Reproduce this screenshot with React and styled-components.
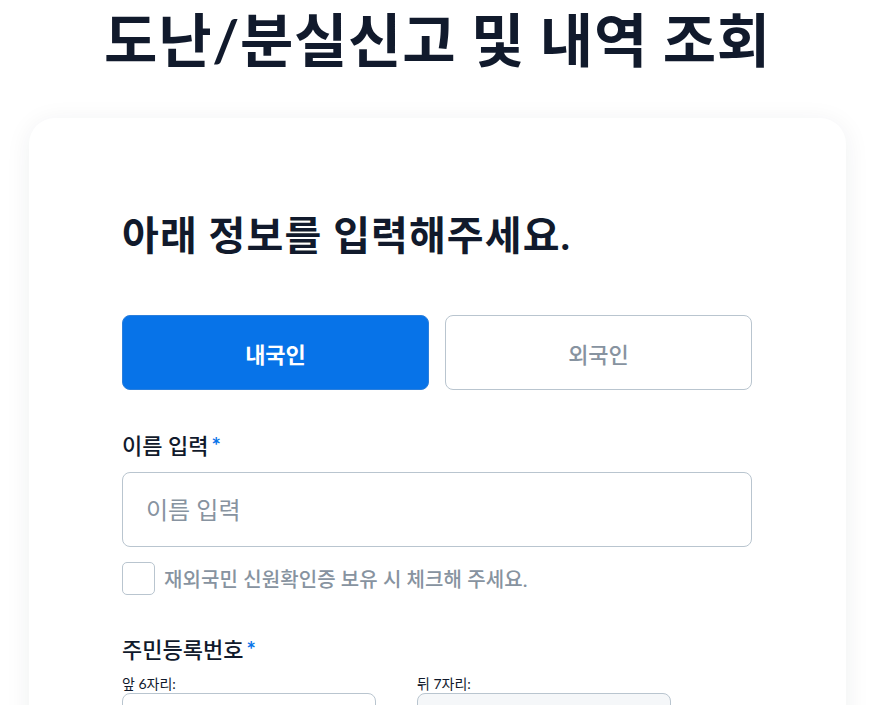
import React, { useState } from "react";
import styled, { createGlobalStyle } from "styled-components";

const darkText = "#111a2c";
const primaryBlue = "#0773e8";
const borderGray = "#b9c5cf";
const mutedText = "#8793a0";

const GlobalStyle = createGlobalStyle`
  html, body {
    margin: 0;
    padding: 0;
    background: #ffffff;
  }
  body {
    font-family: Lato, "Noto Sans CJK KR", sans-serif;
    color: ${darkText};
  }
  * {
    box-sizing: border-box;
  }
`;

const Page = styled.main`
  padding: 5px 25px 0 29px;
`;

const PageTitle = styled.h1`
  margin: 0;
  font-size: 58px;
  line-height: 70px;
  font-weight: 700;
  text-align: center;
  letter-spacing: 0.7px;
  color: ${darkText};
`;

const Card = styled.section`
  margin-top: 43px;
  background: #ffffff;
  border-radius: 26px;
  box-shadow: 0 4px 26px rgba(30, 40, 60, 0.07);
  padding: 91px 94px 40px 93px;
`;

const SubTitle = styled.h2`
  margin: 0;
  font-size: 40px;
  line-height: 52px;
  font-weight: 700;
  letter-spacing: 1.1px;
  color: ${darkText};
`;

const ToggleRow = styled.div`
  display: grid;
  grid-template-columns: 1fr 1fr;
  gap: 16px;
  margin-top: 54px;
`;

const ToggleButton = styled.button`
  height: 75px;
  border-radius: 8px;
  font-family: inherit;
  font-size: 22px;
  font-weight: ${(p) => (p.$active ? 700 : 500)};
  color: ${(p) => (p.$active ? "#ffffff" : mutedText)};
  background: ${(p) => (p.$active ? primaryBlue : "#ffffff")};
  border: 1px solid ${(p) => (p.$active ? "#2b7fdc" : borderGray)};
  cursor: pointer;
`;

const Field = styled.div`
  margin-top: ${(p) => p.$top || 0}px;
`;

const Label = styled.label`
  display: block;
  font-size: 22px;
  line-height: 28px;
  font-weight: 500;
  color: ${darkText};
`;

const Required = styled.span`
  color: ${primaryBlue};
  margin-left: 3px;
  font-weight: 700;
`;

const TextInput = styled.input`
  display: block;
  width: 100%;
  height: 75px;
  margin-top: ${(p) => p.$top ?? 12}px;
  padding: 0 23px;
  border: 1px solid ${borderGray};
  border-radius: 8px;
  background: ${(p) => (p.disabled ? "#f5f7f9" : "#ffffff")};
  font-family: inherit;
  font-size: 24px;
  color: ${darkText};
  outline: none;

  &::placeholder {
    color: ${mutedText};
  }
`;

const CheckRow = styled.label`
  display: flex;
  align-items: center;
  gap: 9px;
  margin-top: 15px;
  font-size: 20px;
  font-weight: 500;
  letter-spacing: 0.1px;
  color: ${mutedText};
  cursor: pointer;
`;

const CheckBox = styled.span`
  width: 33px;
  height: 33px;
  border: 1px solid ${borderGray};
  border-radius: 5px;
  background: ${(p) => (p.$checked ? primaryBlue : "#ffffff")};
`;

const SplitRow = styled.div`
  display: flex;
  gap: 41px;
  margin-top: 11px;
`;

const SplitCol = styled.div`
  width: 254px;
`;

const SmallLabel = styled.div`
  font-size: 14px;
  line-height: 18px;
  color: ${darkText};
`;

const App = () => {
  const [kind, setKind] = useState("domestic");
  const [checked, setChecked] = useState(false);

  return (
    <>
      <GlobalStyle />
      <Page>
        <PageTitle>도난/분실신고 및 내역 조회</PageTitle>
        <Card>
          <SubTitle>아래 정보를 입력해주세요.</SubTitle>

          <ToggleRow>
            <ToggleButton $active={kind === "domestic"} onClick={() => setKind("domestic")}>
              내국인
            </ToggleButton>
            <ToggleButton $active={kind === "foreign"} onClick={() => setKind("foreign")}>
              외국인
            </ToggleButton>
          </ToggleRow>

          <Field $top={42}>
            <Label>
              이름 입력<Required>*</Required>
            </Label>
            <TextInput placeholder="이름 입력" />
          </Field>

          <CheckRow onClick={() => setChecked(!checked)}>
            <CheckBox $checked={checked} />
            재외국민 신원확인증 보유 시 체크해 주세요.
          </CheckRow>

          <Field $top={41}>
            <Label>
              주민등록번호<Required>*</Required>
            </Label>
            <SplitRow>
              <SplitCol>
                <SmallLabel>앞 6자리:</SmallLabel>
                <TextInput $top={0} />
              </SplitCol>
              <SplitCol>
                <SmallLabel>뒤 7자리:</SmallLabel>
                <TextInput $top={0} disabled />
              </SplitCol>
            </SplitRow>
          </Field>
        </Card>
      </Page>
    </>
  );
};

export default App;
